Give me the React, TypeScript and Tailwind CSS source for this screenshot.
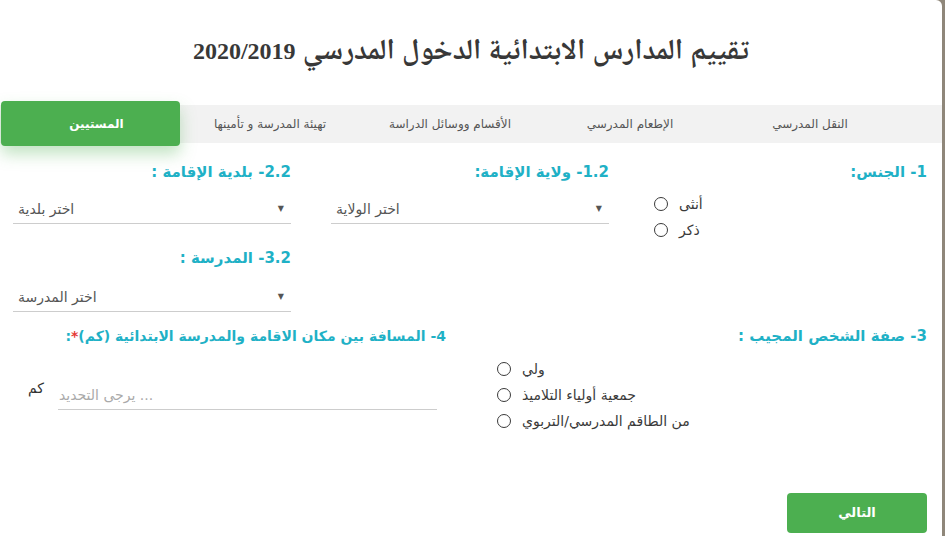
import React from 'react';

const font = { fontFamily: '"DejaVu Sans", "Noto Sans", sans-serif' };
const titleFont = { fontFamily: '"Liberation Serif", "Noto Naskh Arabic", "DejaVu Sans", serif' };

const tabs = ['النقل المدرسي', 'الإطعام المدرسي', 'الأقسام ووسائل الدراسة', 'تهيئة المدرسة و تأمينها', 'المستيين'];

const Label: React.FC<{ children: React.ReactNode; className?: string; size?: string }> = ({
  children,
  className = '',
  size = 'text-[15px]',
}) => (
  <div className={`h-[20px] leading-[20px] font-bold text-[#1fb1c6] ${size} ${className}`}>{children}</div>
);

const Radio: React.FC<{ label: string }> = ({ label }) => (
  <div className="flex items-center gap-[11px] h-[26px]" dir="ltr">
    <span className="w-[14px] h-[14px] rounded-full border border-[#3a3a3a]" />
    <span dir="rtl" className="text-[14px] text-[#3a3a3a]">{label}</span>
  </div>
);

const Select: React.FC<{ placeholder: string; className?: string }> = ({ placeholder, className = '' }) => (
  <div
    className={`flex items-end justify-between h-[34px] pb-[4px] pl-[5px] pr-[7px] border-b border-[#cdcdcd] ${className}`}
    dir="ltr"
  >
    <span dir="rtl" className="text-[14px] leading-[20px] text-[#555]">{placeholder}</span>
    <span className="text-[8px] leading-[20px] text-[#555]">▼</span>
  </div>
);

export default function App() {
  return (
    <div className="flex w-[945px] h-[536px] bg-[#8f877a]" style={font}>
      <div dir="rtl" className="flex flex-col w-[942px] h-full bg-white rounded-tr-[6px]">
        {/* Title */}
        <div className="h-[101px] flex items-center justify-center pb-[2px]">
          <h1 className="text-[29px] leading-[40px] font-bold text-[#383838]" style={titleFont}>
            تقييم المدارس الابتدائية الدخول المدرسي <span className="text-[24px]">2020/2019</span>
          </h1>
        </div>

        {/* Tabs */}
        <div className="flex justify-end h-[38px] mt-[4px] bg-[#f2f2f2]">
          {tabs.map((t, i) =>
            i === tabs.length - 1 ? (
              <div
                key={t}
                className="w-[179px] -mt-[4px] -mb-[3px] ml-[1px] flex items-center justify-center pl-[12px] rounded-[4px] bg-[#4caf50] text-white text-[12px] font-bold shadow-[0_8px_16px_rgba(76,175,80,0.35)]"
              >
                {t}
              </div>
            ) : (
              <div key={t} className="w-[180px] flex items-center justify-center text-[12px] text-[#555]">
                {t}
              </div>
            )
          )}
        </div>

        {/* Form */}
        <div className="pl-[13px] pr-[15px] pt-[19px]">
          <div className="grid grid-cols-3 gap-x-[40px]">
            <div>
              <Label>1- الجنس:</Label>
              <div className="mt-[9px] pl-[5px]" dir="ltr">
                <Radio label="أنثى" />
                <Radio label="ذكر" />
              </div>
            </div>
            <div>
              <Label>1.2- ولاية الإقامة:</Label>
              <Select placeholder="اختر الولاية" className="mt-[8px]" />
            </div>
            <div>
              <Label>2.2- بلدية الإقامة :</Label>
              <Select placeholder="اختر بلدية" className="mt-[8px]" />
            </div>
          </div>

          <div className="grid grid-cols-3 gap-x-[40px] mt-[5px]">
            <div />
            <div />
            <div>
              <Label>3.2- المدرسة :</Label>
              <Select placeholder="اختر المدرسة" className="mt-[10px]" />
            </div>
          </div>

          <div className="grid grid-cols-2 gap-x-[30px] mt-[14px]">
            <div>
              <Label>3- صفة الشخص المجيب :</Label>
              <div className="mt-[10px] pl-[12px]" dir="ltr">
                <Radio label="ولي" />
                <Radio label="جمعية أولياء التلاميذ" />
                <Radio label="من الطاقم المدرسي/التربوي" />
              </div>
            </div>
            <div>
              <Label className="pr-[9px]" size="text-[14px]">
                4- المسافة بين مكان الاقامة والمدرسة الابتدائية (كم)<span className="text-[#e53935]">*</span>:
              </Label>
              <div className="flex mt-[30px] pl-[15px] pr-[18px]" dir="ltr">
                <span dir="rtl" className="text-[14px] leading-[20px] text-[#333] mt-[2px]">كم</span>
                <div className="flex-1 ml-[14px] h-[34px] flex items-end pb-[4px] pl-[1px] border-b border-[#cdcdcd]">
                  <span dir="rtl" className="text-[14px] leading-[20px] text-[#aaa]">... يرجى التحديد</span>
                </div>
              </div>
            </div>
          </div>
        </div>

        {/* Footer */}
        <div className="mt-auto flex justify-start pr-[15px] pb-[3px]">
          <button className="w-[140px] h-[40px] rounded-[4px] bg-[#4caf50] text-white text-[13px] font-bold">
            التالي
          </button>
        </div>
      </div>
    </div>
  );
}
